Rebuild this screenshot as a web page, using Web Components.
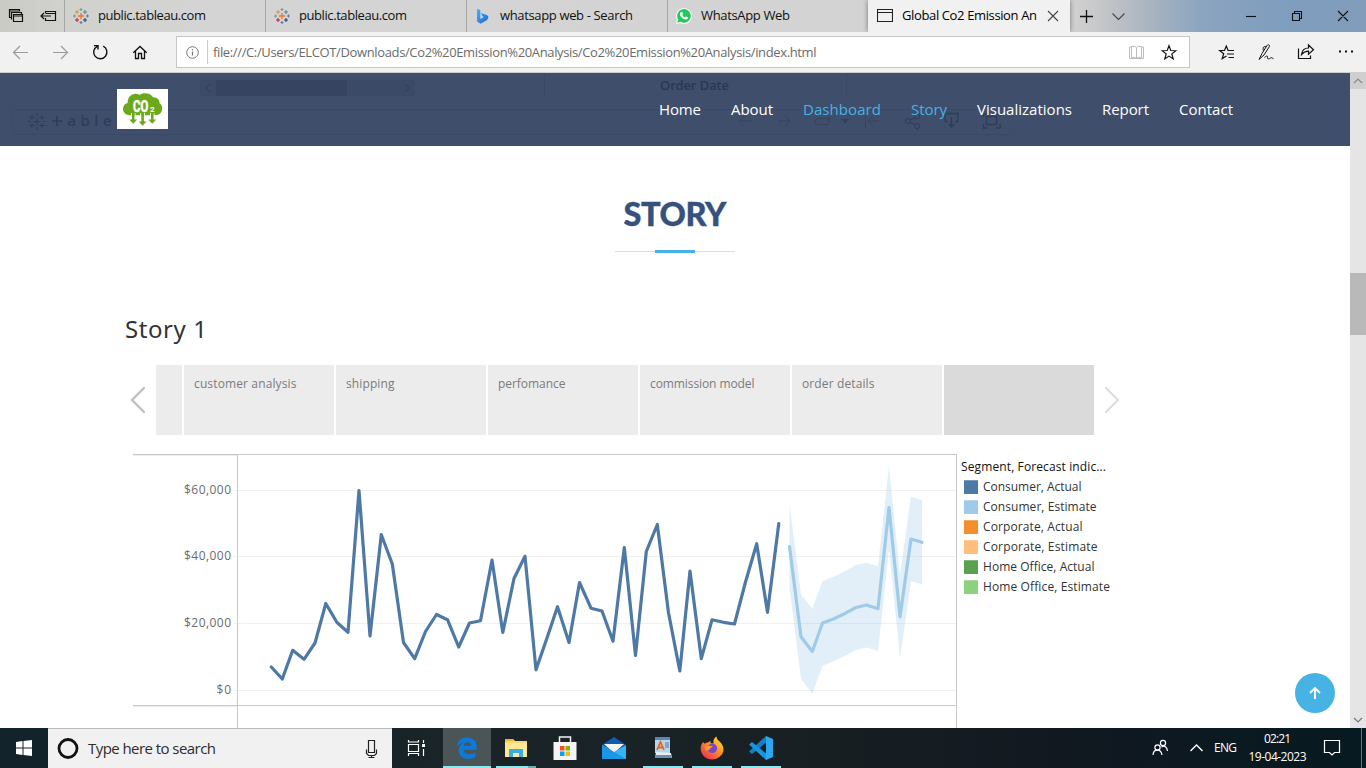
<!DOCTYPE html>
<html lang="en">
<head>
<meta charset="utf-8">
<title>Global Co2 Emission Analysis</title>
<style>
html,body{margin:0;padding:0;height:100%;overflow:hidden;background:#fff;font-family:"Open Sans","Noto Sans",sans-serif}
</style>
</head>
<body>
<desktop-screen></desktop-screen>
<script>
const define=(name,html)=>{
  const t=document.createElement('template');
  t.innerHTML=html;
  customElements.define(name,class extends HTMLElement{
    constructor(){super();this.attachShadow({mode:'open'}).append(t.content.cloneNode(true));}
  });
};

/* A single line of text tracked out or in to a given width. */
customElements.define('fit-text',class extends HTMLElement{
  constructor(){
    super();
    this.attachShadow({mode:'open'}).innerHTML='<style>:host{display:inline-block;white-space:nowrap;flex:none}span{display:inline-block}</style><span><slot></slot></span>';
  }
  connectedCallback(){
    const s=this.shadowRoot.querySelector('span'),w=+this.getAttribute('w');
    this.style.width=w+'px';
    const n=this.textContent.length;
    s.style.letterSpacing=((w-s.getBoundingClientRect().width)/Math.max(1,n-1)).toFixed(3)+'px';
  }
});

define('tableau-mark',`
<style>:host{display:block;width:16px;height:16px}svg{display:block}</style>
<svg width="16" height="16" fill="none" stroke-width="1.1">
<path d="M8 5v6M5 8h6" stroke="#e8762c" stroke-width="1.3"/>
<path d="M4 2v4M2 4h4" stroke="#eb9129"/><path d="M12 2v4M10 4h4" stroke="#5b879b"/>
<path d="M4 10v4M2 12h4" stroke="#c72037"/><path d="M12 10v4M10 12h4" stroke="#1f457e"/>
<path d="M8 0v3M6.500 1.500h3M1.500 6.500v3M0 8h3" stroke="#7199a6"/><path d="M14.500 6.500v3M13 8h3M8 13v3M6.500 14.500h3" stroke="#6877a8"/>
</svg>`);

define('browser-tab',`
<style>
:host{display:flex;align-items:center;box-sizing:border-box;width:201px;height:32px;border-left:1px solid #a5a5a5;padding-left:9px;font-size:13px;line-height:18px;color:#111;flex:none}
:host([active]){width:202px;background:#f1f1f1;border-left:0;padding-left:9px;box-shadow:0 0 5px rgba(0,0,0,.45);clip-path:inset(0 -6px 0 -6px);color:#000}
.i{width:16px;height:16px;margin-right:8px;margin-left:-1px;flex:none;padding-right:1px}
.l{display:flex;align-items:center;margin-bottom:2px}
:host([active]) .i{margin-right:9px;margin-left:0;padding:0}
</style><div class="i"><slot name="icon"></slot></div><div class="l"><slot></slot></div><slot name="close"></slot>`);

define('tab-strip',`
<style>
:host{display:flex;height:32px;background:linear-gradient(90deg,#cbcbc6 0,#d1d1cd 5%,#d4d4d4 15%,#d3d3d3 78%,#c9cacb 80%,#aab5c0 84%,#8ba4bf 88%,#7f9dbe 94%,#829cba 100%);}
.lead{width:64px;flex:none}svg{display:block}
.rest{flex:1}.x{margin-left:9px}
</style>
<svg class="lead" width="64" height="32" fill="none" stroke="#111" stroke-width="1.2"><path d="M11.500 17.500h-2v-8h10v2M9.500 11h10M13.500 14.500h9v7h-9zM13.500 16h9M11.500 19.500v-7h10v2"/><path d="M45.500 13v-1.500h10v9h-10v-2.500M45.500 13.500h10M41 16h10M44 13l-3 3 3 3"/></svg>
<browser-tab><tableau-mark slot="icon"></tableau-mark><fit-text w="108">public.tableau.com</fit-text></browser-tab>
<browser-tab><tableau-mark slot="icon"></tableau-mark><fit-text w="108">public.tableau.com</fit-text></browser-tab>
<browser-tab><svg slot="icon" width="16" height="16"><defs><linearGradient id="b" x2="1" y2="1"><stop stop-color="#39b8f5"/><stop offset="1" stop-color="#2561df"/></linearGradient></defs><path d="M2 .8l3.300 1.300v8.800l3.500-2-1.600-.8-1.100-3 5.500 2c2.500 1 2.200 4-.2 5.300l-5.900 3.400L2 13.400z" fill="url(#b)"/></svg><fit-text w="133">whatsapp web - Search</fit-text></browser-tab>
<browser-tab><svg slot="icon" width="16" height="16"><path d="M0 16l1-4.200A7.900 7.900 0 1 1 4.200 15z" fill="#fff"/><path d="M1.300 14.700l.9-3.200a6.800 6.800 0 1 1 2.400 2.300z" fill="#25c760"/><path d="M5.300 4.100c.8-.5 1.100 0 1.700 1.700 0 .5-.6.800-.7 1.200.7 1.300 1.600 2 2.800 2.500.6-.4.800-1 1.200-.9l1.700.9c.1 1.600-1.500 2.200-2.600 2-3-.7-5.200-2.900-5.500-5.200 0-1 .5-1.800 1.400-2.200z" fill="#fff"/></svg><fit-text w="89">WhatsApp Web</fit-text></browser-tab>
<browser-tab active><svg slot="icon" width="16" height="16" fill="none" stroke="#222" stroke-width="1.100"><path d="M.5 1.500h15v12H.5zM.5 4.500h15"/></svg><fit-text w="135">Global Co2 Emission An</fit-text><svg slot="close" class="x" width="14" height="32" stroke="#444" stroke-width="1.100"><path d="M2 11l10 10M12 11L2 21"/></svg></browser-tab>
<svg class="rest" width="296" height="32" fill="none" stroke="#111" stroke-width="1.100"><path d="M16.500 10v13M10 16.500h13" stroke-width="1.300"/><path d="M42.500 13.500l6 6 6-6" stroke="#444"/><path d="M176 16.500h10"/><path d="M222.500 13.500h7v7h-7zM224.500 13.500v-2h7v7h-2M268 11l10 10M278 11l-10 10"/></svg>
`);

define('address-bar',`
<style>
:host{display:flex;align-items:center;height:41px;box-sizing:border-box;background:#f1f1f1;border-bottom:1px solid #cfcfcf;font-size:13px;color:#6b6b6b}
svg{display:block;flex:none}
.box{box-sizing:border-box;width:1014px;height:32px;border:1px solid #c6c6c6;background:#fff;display:flex;align-items:center}
.sep{width:1px;height:24px;background:#ccc;margin-right:5px}
.gap{flex:1}
</style>
<svg width="176" height="40" fill="none" stroke-width="1.2"><path d="M28 20.500H14M20 14l-6.500 6.500L20 27M53 20.500h14M61 14l6.500 6.500L61 27" stroke="#9b9b9b"/><path d="M97.200 14.300a6.600 6.600 0 1 0 6-.1M94 13.600h4v3.800" stroke="#111" stroke-width="1.400"/><path d="M133.300 20.800l6.700-6.300 6.700 6.300M135.500 19v7.500h3v-5h3v5h3V19" stroke="#111" stroke-width="1.300"/></svg>
<div class="box">
<svg width="30" height="30" fill="none" stroke="#777"><circle cx="15.500" cy="15.500" r="5.800"/><path d="M15.500 14.500v4M15.500 12v1.300" stroke-width="1.200"/></svg><div class="sep"></div>
<fit-text w="603.5">file:///C:/Users/ELCOT/Downloads/Co2%20Emission%20Analysis/Co2%20Emission%20Analysis/index.html</fit-text><div class="gap"></div>
<svg width="68" height="30" fill="none" stroke="#bbb"><path d="M10.500 10h-2v11.500h14V10h-2M15.500 10.500v11M15.500 10.500c-1-1.300-3-1.300-5-1v11c2-.3 4-.3 5 1 1-1.300 3-1.300 5-1v-11c-2-.3-4-.3-5 1"/><path d="M48 8.800l1.800 4.700 5 .2-4 3.200 1.400 5-4.200-2.800-4.200 2.800 1.400-5-4-3.200 5-.2z" stroke="#111" stroke-width="1.200"/></svg>
</div>
<svg width="176" height="40" fill="none" stroke="#111" stroke-width="1.200"><path d="M36.500 24l-4.300 2.600 1.500-4.800-4-3.300h4.800l1.800-4.500 1.800 4.500H44M37 22h7M38.500 25.500h5.500"/><path d="M69 27.500l3-6 5-8c1-1.600 3.300-.4 2.300 1.200L74 23l-5 4.500M76 14.800c-3-.8-3 1-2.700 4M74.500 25.500c2-2 3.500-2 3 0s2 1.500 3 .5 2 .3 3 .8" stroke-width="1"/><path d="M108.500 16.500v10h12v-3M111.500 22.500c.5-4 3-6.500 7-6.500v-3l5 4.700-5 4.500v-3c-3 0-5 1-7 3.300z"/><path d="M149 19.500h2M155 19.500h2M161 19.500h2" stroke-width="2"/></svg>
`);

define('co2-logo',`
<style>:host{display:block;width:51px;height:40px;background:#fff}svg{display:block}text{font:bold 16px "Roboto","Liberation Sans",sans-serif}</style>
<svg width="51" height="40" fill="#6aa81c"><path d="M13 26.200c-4 0-7-2.600-7-6.300 0-3 1.800-5.400 4.600-6 0-5.500 3.500-9.200 8-9.200 1.500 0 2.700.4 3.800 1.200C27 2.600 34 4.400 36 8.200c4.500-.2 6.800 3 6.500 6 2 1 2.900 3.200 2.800 5.300-.3 4.300-3 6.700-7 6.700z"/>
<path d="M14 24h1v6h-1zM17.500 24h1v6h-1zM23.300 24h1v7h-1zM26.900 24h1v7h-1zM33 24h1v6h-1zM36.500 24h1v6h-1z" fill="#fff"/>
<path d="M15 24h2.500v6.500h2.700l-4 4.300-4-4.300H15zM24.300 24h2.600v8.500h2.600l-3.900 4.300-3.900-4.300h2.600zM34 24h2.500v6.500h2.700l-4 4.300-4-4.300H34z"/>
<text x="16" y="23" fill="#fff" stroke="#fff" stroke-width=".5" textLength="15.200" lengthAdjust="spacingAndGlyphs">CO</text><text x="33" y="23" fill="#fff" style="font-size:8px">2</text></svg>`);

define('site-header',`
<style>
:host{display:flex;align-items:flex-start;height:73px;background:#3f4e6b;position:relative;padding:16px 0 0 117px;box-sizing:border-box}
.ghost{position:absolute;left:0;top:0;font:500 13px "Noto Sans",sans-serif}
co2-logo{position:relative}
nav{position:relative;display:flex;gap:30px;margin-left:491px;font-size:15px;line-height:20px;margin-top:10px;color:#fff}
.on{color:#47b2e4}
</style>
<svg class="ghost" width="1350" height="73" fill="none" stroke="#2f3c58">
<path fill="#3b4a67" stroke="none" d="M200 7h215v16H200z"/><path fill="#364461" stroke="none" d="M216 7h131v16H216z"/><path d="M210 11l-4 4 4 4M405 11l4 4-4 4"/>
<path d="M544.500 0v23M846.500 0v23" stroke="#394865"/><path d="M12 61.500h1000M12 36.500h1000M12.500 36v25" stroke="#3b4a67"/>
<path d="M37 45v7M33.500 48.500h7M32 42v5M29.500 44.500h5M42 42v5M39.500 44.500h5M32 50v5M29.500 52.500h5M42 50v5M39.500 52.500h5M37 40v3M37 54v3M28 48.500h3M43 48.500h3"/>
<path d="M57 43v10M52 48h10" stroke-width="1.600"/>
<text x="67.500" y="53" fill="#2f3c58" stroke="none" textLength="44" style="font-size:15px">able</text>
<text x="660" y="17" fill="#2a3653" stroke="none" textLength="69">Order Date</text>
<path d="M751 48h-12M744 43l-5 5 5 5M778 48h12M785 43l5 5-5 5M827 42.500l3 3-3 3M830 45.500h-12c-2 0-6 6 0 6h9c3 0 3-5 0-5M865.500 42v13M879 48h-11M873 43l-5 5 5 5" stroke="#35435f"/><path d="M841 46h8l-4 5z" fill="#334160" stroke="none"/>
<path d="M914.500 45l-4.500 2M910 49l5 3" /><circle cx="917" cy="43.500" r="2.500"/><circle cx="908" cy="48" r="2.500"/><circle cx="917" cy="53" r="2.500"/>
<path d="M948 48.500h-3v-8h13v8h-3M951.500 44v9M949 51l2.500 3 2.500-3M986.500 43.500h10v8h-10zM983.500 44v-3h3M996 41h4v3M1000 51v4h-4M987 55h-3.500v-4" stroke-width="1.300"/>
</svg>
<co2-logo></co2-logo>
<nav><fit-text w="42">Home</fit-text><fit-text w="42">About</fit-text><fit-text w="78" class="on">Dashboard</fit-text><fit-text w="36" class="on">Story</fit-text><fit-text w="95">Visualizations</fit-text><fit-text w="47">Report</fit-text><fit-text w="54">Contact</fit-text></nav>
`);

define('section-title',`
<style>:host{display:flex;flex-direction:column;align-items:center;font:900 32.500px/40px Lato,sans-serif;color:#37517e;-webkit-text-stroke:.4px #37517e}
.r{width:120px;height:3px;margin-top:16px;background:linear-gradient(#47b2e4,#47b2e4) center/40px 3px no-repeat,linear-gradient(#ddd,#ddd) 0 1px/120px 1px no-repeat}</style>
<slot></slot><div class="r"></div>`);

define('story-point',`
<style>:host{display:block;box-sizing:border-box;width:150px;height:70px;background:#ececec;padding:10px 0 0 10px;font-size:12px;line-height:18px;color:#7b7b7b}:host([first]){width:26px}:host([current]){background:#dadada}</style><slot></slot>`);

define('story-nav',`
<style>:host{display:flex;gap:2px}svg{display:block}svg:last-child{margin-left:-2px}</style>
<svg width="29" height="70" fill="none" stroke="#bdbdbd" stroke-width="2.200" stroke-linecap="round"><path d="M19 23L7 35l12 12"/></svg>
<story-point first></story-point>
<story-point><fit-text w="102.500">customer analysis</fit-text></story-point>
<story-point><fit-text w="48.500">shipping</fit-text></story-point>
<story-point><fit-text w="67.500">perfomance</fit-text></story-point>
<story-point><fit-text w="104.500">commission model</fit-text></story-point>
<story-point><fit-text w="72.500">order details</fit-text></story-point>
<story-point current></story-point>
<svg width="30" height="70" fill="none" stroke="#ddd" stroke-width="2.200" stroke-linecap="round"><path d="M12 23l12 12-12 12"/></svg>`);

const actual='271.3,667 282.3,679 292.7,650.3 304,659.3 315,643 325.8,603.5 337,622.5 348,632.3 359,490.5 370,636 381.3,534.7 392.3,564 403.5,642.5 414.7,658.7 425.5,631.5 436.5,614.5 447.5,619.7 458.7,647 469.5,623 480.5,620.8 492,560 502.8,632.5 514,578.5 525,556.3 536,669.8 547,638 557.5,606.7 569,642.5 579.5,582.5 591,608.2 602,611 613,641.3 624.3,547.5 635.5,655.5 646.3,551.5 657.3,524.5 668.5,612.7 679.8,671 690,571 701.3,658.7 712,619.8 723.5,622.3 734.5,624 745.5,582 756.7,543.7 767.5,612.3 778.8,523.5';
const forecast='789.5,546.5 801,636.7 812.3,651.5 822.5,623 833.5,619 844.5,613.7 856,607.5 866.5,605 878,608.7 889,507.5 900,616.7 911,539 922,542.3';
const band='789.5,504 801,594.5 812.3,608.7 822.5,581 834,576.5 845,571 856,565 866.5,562.7 878,566.3 889,466 900,575 911,496.7 922,500.3 922,584.3 911,581.3 900,658.5 889,549 878,651 866.5,647.5 856,650 845,656 834,661 822.5,665.7 812.3,693.5 801,679 789.5,588';
define('forecast-chart',`
<style>:host{display:block}svg{display:block}text{font:12px "Open Sans",sans-serif;fill:#6b6b6b}</style>
<svg width="824" height="274" viewBox="133 454 824 274" fill="none">
<path d="M234 490.500h722M234 556.500h722M234 623.500h722M234 690.500h722" stroke="#f0f0f0"/>
<path d="M133 455.500h104M133 706.500h104" stroke="#ececec"/>
<polygon points="${band}" fill="#a0cbe8" fill-opacity=".3"/>
<path d="M133 454.500h824M133 705.500h824M237.500 454v274M956.500 454v274" stroke="#c8c8c8"/>
<g stroke-width="3.200" stroke-linejoin="round" stroke-linecap="round"><polyline points="${actual}" stroke="#4e79a7"/><polyline points="${forecast}" stroke="#a0cbe8"/></g>
<text x="184" y="494" textLength="47">$60,000</text><text x="184" y="560" textLength="47">$40,000</text><text x="184" y="627" textLength="47">$20,000</text><text x="216.500" y="694" textLength="14.500">$0</text>
</svg>`);

define('legend-row',`
<style>:host{display:flex;align-items:center;height:20px;line-height:20px;padding-left:3px}i{width:14px;height:14px;margin-right:5px;background:var(--c);box-shadow:inset 0 1px rgba(255,255,255,.25)}</style><i></i><slot></slot>`);

define('chart-legend',`
<style>:host{display:block;padding:3px 0 0 4px;font-size:12px;color:#333}.h{height:20px;line-height:20px;font-weight:500;color:#111}</style>
<div class="h"><fit-text w="145">Segment, Forecast indic...</fit-text></div>
<legend-row style="--c:#4e79a7"><fit-text w="98.500">Consumer, Actual</fit-text></legend-row>
<legend-row style="--c:#a0cbe8"><fit-text w="113.500">Consumer, Estimate</fit-text></legend-row>
<legend-row style="--c:#f28e2b"><fit-text w="99.500">Corporate, Actual</fit-text></legend-row>
<legend-row style="--c:#ffbe7d"><fit-text w="114.500">Corporate, Estimate</fit-text></legend-row>
<legend-row style="--c:#59a14f"><fit-text w="111.500">Home Office, Actual</fit-text></legend-row>
<legend-row style="--c:#8cd17d"><fit-text w="127">Home Office, Estimate</fit-text></legend-row>`);

define('scroll-track',`
<style>:host{display:flex;flex-direction:column;width:16px;background:#e5e5e5}svg{display:block}.t{height:62px;margin-top:184px;background:#b9b9b9}.g{flex:1}</style>
<svg width="16" height="16" fill="none" stroke="#8a8a8a" stroke-width="1.200"><path fill="#cfcfcf" stroke="none" d="M0 0h16v16H0z"/><path d="M4 10l4-4 4 4"/></svg>
<div class="t"></div><div class="g"></div><svg width="16" height="16" fill="none" stroke="#777" stroke-width="1.200"><path d="M4 6l4 4 4-4"/></svg>`);

define('web-page',`
<style>
:host{display:flex;height:655px}
.p{position:relative;width:1350px;background:#fff;overflow:hidden;height:655px}
section-title{margin-top:48px}
.t{font:24px/32px "Noto Sans",sans-serif;color:#333;margin:60px 0 0 125px;height:32px}
story-nav{margin:20px 0 0 125px}
.row{display:flex;margin:19px 0 0 133px}
.up{position:absolute;right:15px;bottom:15px}
</style>
<div class="p"><site-header></site-header>
<section-title><fit-text w="103">STORY</fit-text></section-title>
<div class="t"><fit-text w="82">Story 1</fit-text></div>
<story-nav></story-nav>
<div class="row"><forecast-chart></forecast-chart><chart-legend></chart-legend></div>
<svg class="up" width="40" height="40"><circle cx="20" cy="20" r="20" fill="#47b2e4"/><path d="M20 26V15.500M15 20l5-5 5 5" fill="none" stroke="#fff" stroke-width="1.900"/></svg>
</div><scroll-track></scroll-track>`);

define('task-item',`
<style>:host{display:flex;align-items:center;justify-content:center;box-sizing:border-box;width:49px;height:40px;flex:none;position:relative;padding-right:2px}
:host([active]){background:#4b5457;width:48px;margin-right:1px;padding-right:0}
:host([open])::after{content:"";position:absolute;bottom:0;left:4px;right:5px;height:2px;background:#8ce8ec}
:host([double])::after{background:linear-gradient(90deg,#8ce8ec 32px,#6aabae 32px)}
:host([active])::after{left:0;right:0}</style><slot></slot>`);

define('task-bar',`
<style>
:host{display:flex;height:40px;background:linear-gradient(90deg,#12232b,#1a2428 35%,#182023 58%,#111820 78%,#071a21 100%);color:#fff}
svg{display:block;flex:none}
.s{width:344px;box-sizing:border-box;background:#f1f1f1;border-top:1px solid #bbb;display:flex;align-items:center;font-size:15px;line-height:20px;color:#2d2d2d}
.s fit-text{margin-bottom:2px}
.g{flex:1}
.l{font-size:12px;align-self:center;margin-bottom:1px}
.d{display:flex;flex-direction:column;align-items:center;justify-content:center;font-size:12px;line-height:18px;margin-left:11px;width:59px}
.e{border-left:1px solid #68757b;width:4px;margin-left:12px}
</style>
<svg width="48" height="40" fill="#fff"><path d="M16 14l6.500-1v6.500H16zM23.500 12.900L32 12v7.500h-8.500zM16 20.500h6.500V27L16 26zM23.500 20.500H32V28l-8.500-1.100z"/></svg>
<div class="s"><svg width="40" height="39"><circle cx="20" cy="19.500" r="9" fill="none" stroke="#111" stroke-width="2.800"/></svg><fit-text w="128">Type here to search</fit-text><div class="g"></div><svg width="40" height="39" fill="none" stroke="#222" stroke-width="1.200"><path d="M16.500 11.500h6v12h-6zM14.500 20.500v4l2 2h6l2-2v-4M19.500 26.500v2M16.500 28.500h6"/></svg></div>
<task-item style="width:51px"><svg width="20" height="20" fill="none" stroke="#fff" stroke-width="1.200"><path d="M1.500 6.500h10v7h-10zM1.500 2v2h10V2M1.500 18v-2.500h10V18M16.500 2v3M16.500 11v7"/><path d="M15 6h3v3h-3z" fill="#fff" stroke="none"/></svg></task-item>
<task-item open active><svg width="22" height="22" viewBox="0 0 22 22"><path d="M1 9.500C1.500 4 5.500.6 11 .6c6 0 9.700 4 9.700 9.500v2.600H7.600c.2 3 2.600 4.500 5.700 4.500 2.400 0 4.300-.6 6.200-1.700v4.400c-2 1.200-4.500 1.800-7.200 1.800-6 0-9.600-3.300-9.600-8.300 0-3.700 2-6.300 4.600-8-3 .8-5 2.300-6.300 4.100zM7.700 8.700h7.400c0-2.200-1.400-3.500-3.600-3.500S8 6.500 7.700 8.700z" fill="#0a7bdb" fill-rule="evenodd"/></svg></task-item>
<task-item open double><svg width="22" height="20"><path d="M0 1h8l2 2h12v16H0z" fill="#f8d775"/><path d="M0 1h8l1 2H0z" fill="#eeb52c"/><path d="M0 5h22v14H0z" fill="#ffe794"/><path d="M4 19v-8h14v8h-4v-4H8v4z" fill="#37aee5"/></svg></task-item>
<task-item><svg width="24" height="26"><path d="M6.500 8V2h11v6" fill="none" stroke="#f2f2f2" stroke-width="1.500"/><path d="M.5 7h23v18H.5z" fill="#f5f5f5"/><path d="M7 11h4.500v4.500H7z" fill="#f25022"/><path d="M12.500 11H17v4.500h-4.500z" fill="#7fba00"/><path d="M7 16.500h4.500V21H7z" fill="#00a4ef"/><path d="M12.500 16.500H17V21h-4.500z" fill="#ffb900"/></svg></task-item>
<task-item><svg width="24" height="24"><path d="M0 9L12 1l12 8-12 8z" fill="#0f5db0"/><path d="M2 8h20l-10 9z" fill="#f4f4f4"/><path d="M0 9l12 7 12-7v14H0z" fill="#35b4ef"/><path d="M0 9l24 14H0z" fill="#1b96e4"/></svg></task-item>
<task-item open><svg width="20" height="24"><path d="M2 1h15v16H2z" fill="#b8d5ee"/><path d="M2 1h15v3H2z" fill="#5b87b2"/><path d="M3 16l15 1 1 5H2z" fill="#e8eef3"/><path d="M2 19h16l1 3H2z" fill="#6f8fad"/><path d="M4 14L7.500 6 11 14M5.500 11.500h4" fill="none" stroke="#e8651c" stroke-width="1.800"/><path d="M12 7h4M12 9h4M12 11h4" stroke="#4279b6"/></svg></task-item>
<task-item open><svg width="24" height="24"><defs><linearGradient id="f" x1="1" x2=".2" y2="1"><stop stop-color="#fff04a"/><stop offset=".45" stop-color="#ff9a22"/><stop offset="1" stop-color="#ef2b50"/></linearGradient></defs><path d="M3 6l1.500 1.800C6 6.500 7 6.300 8 6.500c1-1 2-1.500 3-1.500-.5.800-.7 1.300-.5 2l3 .5C13 4 14 2 16.500.5c0 2.500 2 4 3.500 5.500 2 2 3.500 4.500 3.500 7.500C23.500 19 18 23.500 12 23.500S.7 19 .7 12.800C.7 10 1.700 8 3 6z" fill="url(#f)"/><circle cx="12.300" cy="12.300" r="4.800" fill="#7745cf"/><path d="M5 10c2 0 5-1 8 .5-1 1.500-3 1-3.500 3-1 1-3 1.500-4.500 0z" fill="#ff9a25"/></svg></task-item>
<task-item open><svg width="24" height="24"><path d="M17 0l7 3v18l-7 3z" fill="#2ca8f0"/><path d="M17 0v6.500L3 18l-3-2.500z" fill="#1280c9"/><path d="M17 24v-6.500L3 6 0 8.500z" fill="#1795df"/></svg></task-item>
<div class="g"></div>
<svg width="64" height="40" fill="none" stroke="#fff" stroke-width="1.200"><circle cx="7.500" cy="19.500" r="2.600"/><path d="M3 27c.5-6.500 8-6.500 9 0"/><circle cx="13" cy="15" r="2.600"/><path d="M11.500 19c3-2 5.500 0 6 4"/><path d="M40.500 23l6-6 6 6" stroke-width="1.400"/></svg>
<fit-text class="l" w="23">ENG</fit-text>
<div class="d"><fit-text w="27">02:21</fit-text><fit-text w="58">19-04-2023</fit-text></div>
<svg width="34" height="40" fill="none" stroke="#fff" stroke-width="1.200" style="margin-left:8px"><path d="M9.500 12.500h15v12h-5l-2.500 2.500-2.500-2.500h-5z"/></svg>
<div class="e"></div>`);

define('desktop-screen',`
<style>:host{display:flex;flex-direction:column;width:1366px;height:768px;overflow:hidden}</style>
<tab-strip></tab-strip><address-bar></address-bar><web-page></web-page><task-bar></task-bar>`);
</script>
</body>
</html>
